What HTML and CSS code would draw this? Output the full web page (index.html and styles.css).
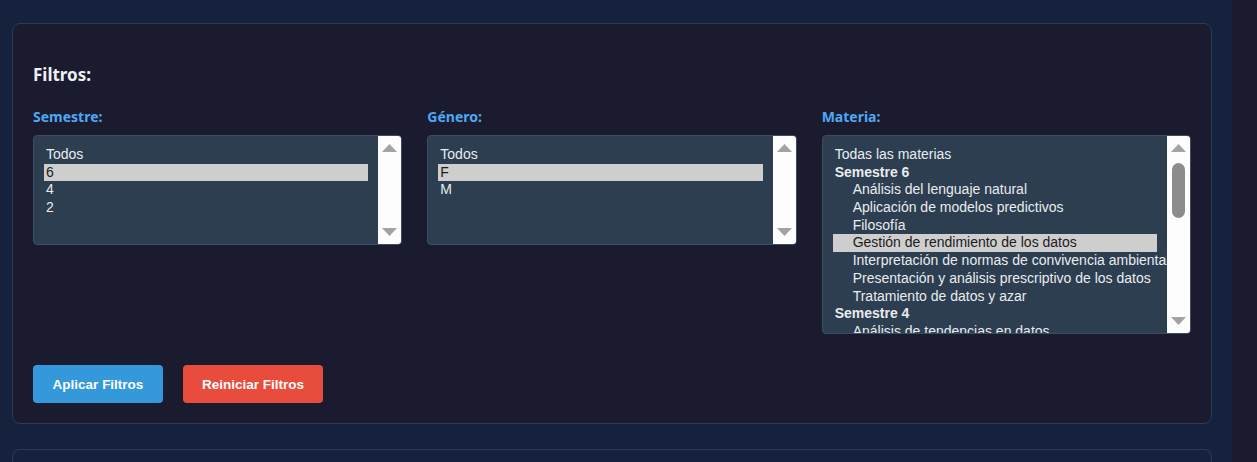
FILE: index.html
```html
<!DOCTYPE html>
<html lang="es">
<head>
<meta charset="utf-8">
<title>Filtros</title>
<link rel="stylesheet" href="styles.css">
</head>
<body>
<div class="page">
  <main class="main">
    <section class="card">
      <h3 class="title">Filtros:</h3>
      <div class="filters">
        <div class="field">
          <label class="label">Semestre:</label>
          <div class="listbox short">
            <div class="options">
              <div class="opt">Todos</div>
              <div class="opt sel">6</div>
              <div class="opt">4</div>
              <div class="opt">2</div>
            </div>
            <div class="sbar">
              <svg class="arrow" viewBox="0 0 15 8"><polygon points="0,8 7.5,0 15,8"/></svg>
              <div class="track"></div>
              <svg class="arrow" viewBox="0 0 15 8"><polygon points="0,0 7.5,8 15,0"/></svg>
            </div>
          </div>
        </div>
        <div class="field">
          <label class="label">Género:</label>
          <div class="listbox short">
            <div class="options">
              <div class="opt">Todos</div>
              <div class="opt sel">F</div>
              <div class="opt">M</div>
            </div>
            <div class="sbar">
              <svg class="arrow" viewBox="0 0 15 8"><polygon points="0,8 7.5,0 15,8"/></svg>
              <div class="track"></div>
              <svg class="arrow" viewBox="0 0 15 8"><polygon points="0,0 7.5,8 15,0"/></svg>
            </div>
          </div>
        </div>
        <div class="field">
          <label class="label">Materia:</label>
          <div class="listbox tall">
            <div class="options">
              <div class="opt">Todas las materias</div>
              <div class="opt group">Semestre 6</div>
              <div class="opt sub">Análisis del lenguaje natural</div>
              <div class="opt sub">Aplicación de modelos predictivos</div>
              <div class="opt sub">Filosofía</div>
              <div class="opt sub sel">Gestión de rendimiento de los datos</div>
              <div class="opt sub">Interpretación de normas de convivencia ambiental</div>
              <div class="opt sub">Presentación y análisis prescriptivo de los datos</div>
              <div class="opt sub">Tratamiento de datos y azar</div>
              <div class="opt group">Semestre 4</div>
              <div class="opt sub">Análisis de tendencias en datos</div>
            </div>
            <div class="sbar">
              <svg class="arrow" viewBox="0 0 15 8"><polygon points="0,8 7.5,0 15,8"/></svg>
              <div class="track"><div class="thumb"></div></div>
              <svg class="arrow" viewBox="0 0 15 8"><polygon points="0,0 7.5,8 15,0"/></svg>
            </div>
          </div>
        </div>
      </div>
      <div class="actions">
        <button class="btn apply">Aplicar Filtros</button>
        <button class="btn reset">Reiniciar Filtros</button>
      </div>
    </section>
    <section class="card next"></section>
  </main>
  <div class="rail"></div>
</div>
</body>
</html>
```

FILE: styles.css
```css
* { box-sizing: border-box; }
html, body { margin: 0; height: 100%; }
body {
  background: #16213e;
  font-family: "Noto Sans", "Open Sans", sans-serif;
  color: #e8e8e8;
  overflow: hidden;
}
.page { display: flex; height: 100%; }
.main { flex: 1; min-width: 0; padding: 23px 20px 0 12px; overflow: hidden; }
.rail { width: 25px; background: #1b1b30; }

.card {
  background: #1a1b2f;
  border: 1px solid #2b3b55;
  border-radius: 8px;
  padding: 20px;
}
.card.next { margin-top: 25px; height: 13px; padding: 0; border-bottom: none; border-radius: 8px 8px 0 0; background: #16213e; }

.title {
  margin: 18px 0 20px;
  font-size: 17px;
  line-height: 25px;
  font-weight: 700;
  color: #eef0f4;
}

.filters {
  display: grid;
  grid-template-columns: repeat(3, minmax(0, 1fr));
  column-gap: 25px;
  align-items: start;
}
.field { min-width: 0; }
.label {
  display: block;
  font-size: 14px;
  line-height: 19px;
  font-weight: 700;
  color: #4fa8f3;
  margin-bottom: 9px;
}
.listbox {
  display: flex;
  background: #2c3e50;
  border: 1px solid #3b4c63;
  border-radius: 4px;
  overflow: hidden;
}
.listbox.short { height: 110px; }
.listbox.tall { height: 199px; }
.options {
  flex: 1;
  min-width: 0;
  padding: 10px;
  overflow: hidden;
  font-family: "Liberation Sans", Arial, sans-serif;
  font-size: 14px;
}
.opt {
  height: 17.7px;
  line-height: 17.7px;
  padding-left: 2px;
  white-space: nowrap;
  color: #e9ecef;
}
.opt.sel { background: #cecece; color: #1c1c1c; }
.opt.sub { padding-left: 20px; }
.opt.group { font-weight: 700; }

.sbar {
  width: 23px;
  flex: none;
  background: #fdfdfd;
  display: flex;
  flex-direction: column;
  align-items: center;
}
.arrow { width: 15px; height: 8px; fill: #a3a3a3; flex: none; }
.arrow:first-child { margin-top: 8px; }
.arrow:last-child { margin-bottom: 8px; }
.track { flex: 1; width: 100%; display: flex; justify-content: center; }
.thumb {
  margin-top: 11px;
  width: 13px;
  height: 55px;
  border-radius: 7px;
  background: #8c8c8c;
}

.actions { display: flex; gap: 20px; margin-top: 31px; }
.btn {
  border: none;
  border-radius: 4px;
  padding: 0;
  height: 38px;
  font-family: "Liberation Sans", Arial, sans-serif;
  font-size: 13.5px;
  font-weight: 700;
  color: #fff;
}
.btn.apply { background: #3498db; width: 130px; }
.btn.reset { background: #e74c3c; width: 140px; }
```
